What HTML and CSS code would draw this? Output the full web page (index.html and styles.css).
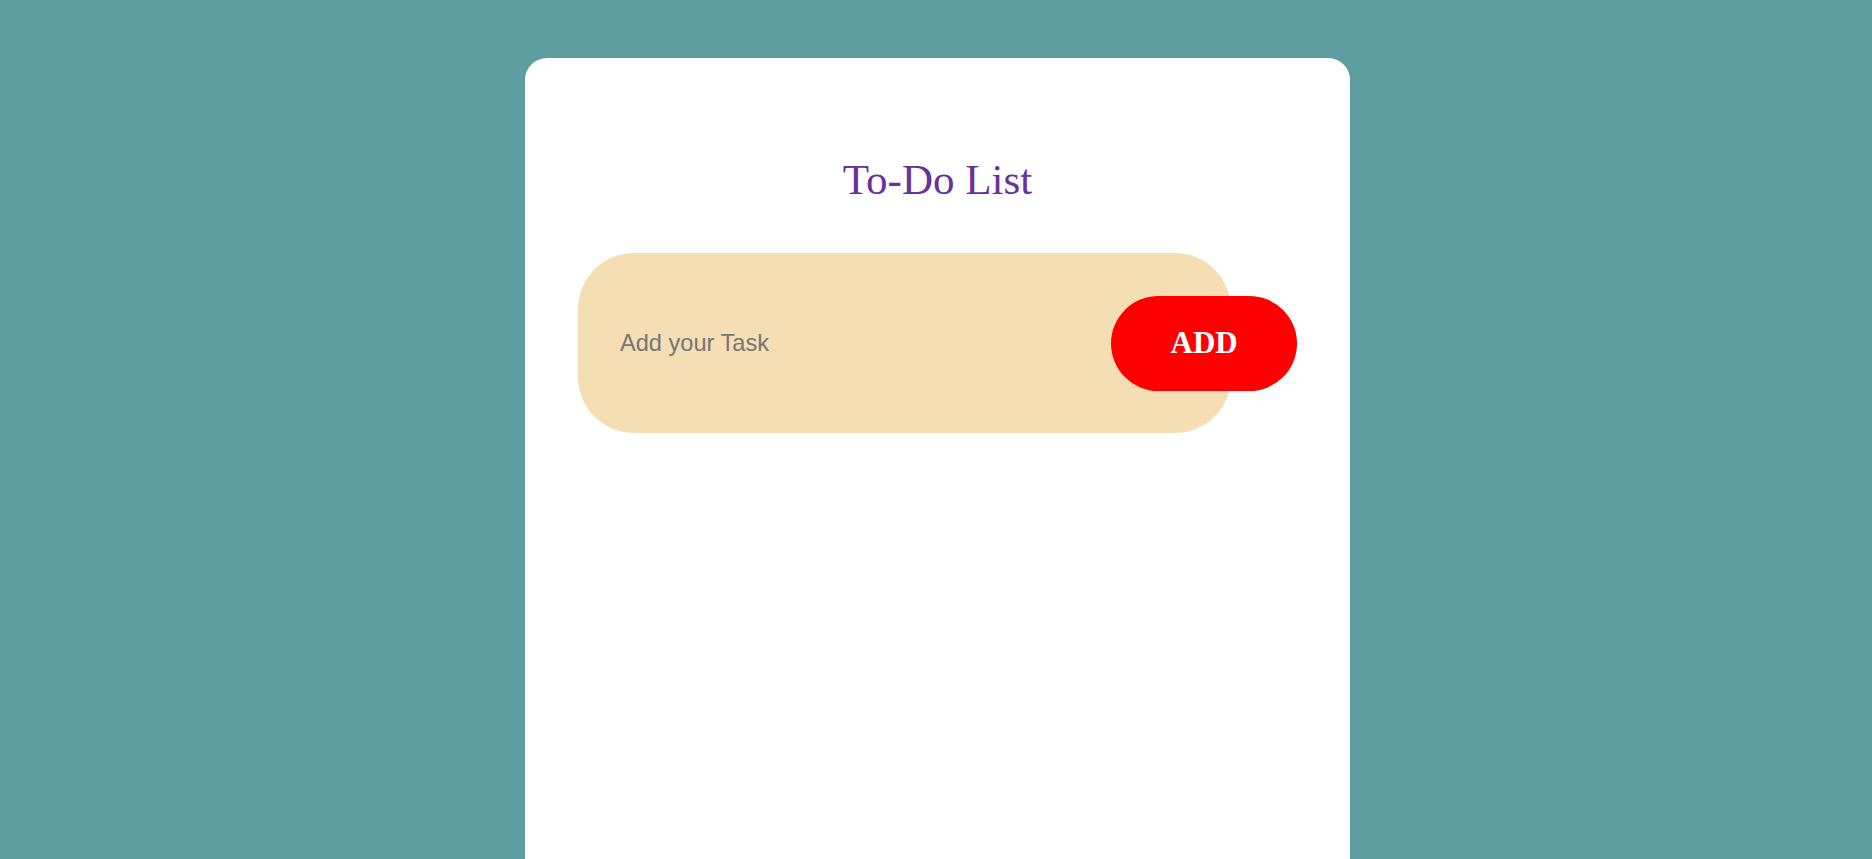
FILE: index.html
```html
<!DOCTYPE html>
<html>
<head>
<meta charset="utf-8">
<title>To-Do List</title>
<link rel="stylesheet" href="styles.css">
</head>
<body>
<main class="app">
  <h1 class="title">To-Do List</h1>
  <div class="row">
    <input class="task-input" type="text" placeholder="Add your Task">
    <button class="add-btn">ADD</button>
  </div>
  <ul class="list"></ul>
</main>
</body>
</html>
```

FILE: styles.css
```css
html, body {
  height: 100%;
}
body {
  margin: 0;
  overflow: hidden;
  background: #5f9ea0;
  display: flex;
  justify-content: center;
  align-items: flex-start;
  padding-left: 3px;
  box-sizing: border-box;
}
.app {
  width: 825px;
  box-sizing: border-box;
  margin-top: 58px;
  height: 900px;
  background: #ffffff;
  border-radius: 22px 22px 0 0;
  padding: 97px 53px 0;
  font-family: "Liberation Serif", "Times New Roman", serif;
}
.title {
  margin: 0;
  text-align: center;
  font-weight: normal;
  font-size: 43px;
  line-height: 49px;
  color: #663399;
}
.row {
  margin-top: 49px;
  display: flex;
  align-items: center;
}
.task-input {
  width: 654px;
  height: 180px;
  box-sizing: border-box;
  border: none;
  outline: none;
  background: #f5deb3;
  border-radius: 56px;
  padding: 0 0 0 42px;
  font-family: "Liberation Sans", Arial, sans-serif;
  font-size: 23.6px;
  color: #333;
}
.task-input::placeholder {
  color: #757575;
}
.add-btn {
  width: 186px;
  height: 95px;
  margin-left: -120px;
  border: none;
  outline: none;
  background: #ff0000;
  color: #ffffff;
  border-radius: 48px;
  font-family: "Liberation Serif", "Times New Roman", serif;
  font-weight: bold;
  font-size: 31px;
  padding: 0;
  cursor: pointer;
}
.list {
  margin: 0;
  padding: 0;
  list-style: none;
}
```
